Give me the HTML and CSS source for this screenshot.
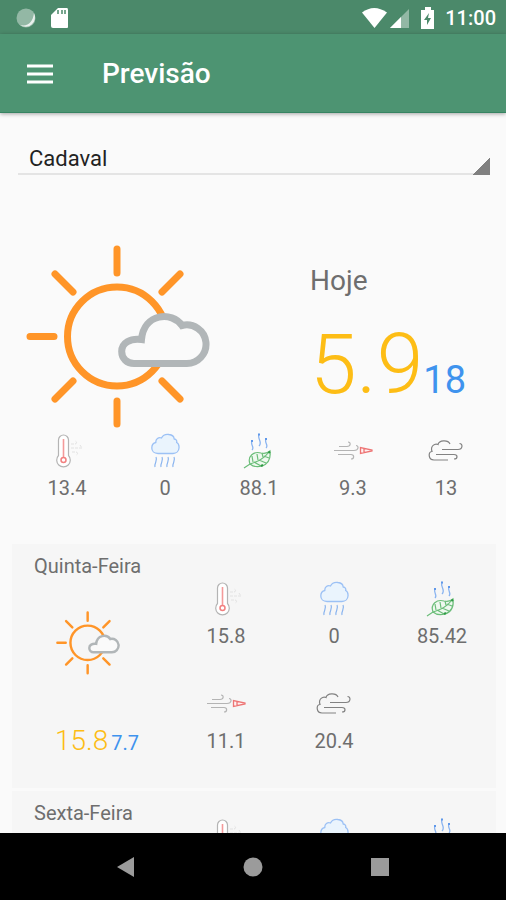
FILE: index.html
```html
<!DOCTYPE html>
<html lang="pt">
<head>
<meta charset="utf-8">
<meta name="viewport" content="width=device-width, initial-scale=1">
<title>Previsão</title>
<link rel="stylesheet" href="styles.css">
</head>
<body>
<svg class="sprite" aria-hidden="true">
  <symbol id="sun" viewBox="0 0 184 184">
    <g fill="none" stroke="#ff9528" stroke-width="7" stroke-linecap="round">
      <circle cx="91" cy="91.500" r="49.500"/>
      <path d="M91 4v24M91 156v23M4 91.500h24M29 29l18 18M154 29l-18 18M47 136l-18 18M136 136l18 18"/>
    </g>
    <path class="cloud" stroke="#b1b6b8" stroke-width="7" d="M108 118.500H160A19.300 19.300 0 1 0 156 80.500C146 66 118 68 115.500 94.500C104 93 95.700 98 95.700 106.500C95.700 113.500 101 118.500 108 118.500Z"/>
  </symbol>
  <symbol id="thermo" viewBox="0 0 40 36">
    <g fill="none">
      <path fill="#fff" stroke="#b4b4b4" stroke-width="1.200" d="M11.500 7a5 5 0 0 1 10 0v15.500a6.800 6.800 0 1 1-10 0z"/>
      <path stroke="#f49a9a" stroke-width="1.600" d="M16.500 6v18"/>
      <circle cx="16.500" cy="27" r="2.500" stroke="#f28080" stroke-width="1.500"/>
      <path stroke="#e2e2e2" stroke-dasharray="3 1" d="M24 15h11l-2-3M24 11h4c2 0 2-3 0-3M25 19h4c2 0 2 3 0 3"/>
    </g>
  </symbol>
  <symbol id="rain" viewBox="0 0 40 36">
    <path fill="#eaf4fd" stroke="#9cc1f5" stroke-width="1.300" d="M13 20.500C9 20.500 6.800 18 6.800 15c0-3 1.500-5 4-5.500C10.500 6 13.500 4 16.500 5c1.500-3 4.500-4 7.500-3.500 3 .3 5 2 5.200 4.500 2.300.3 2.800 2 2.500 3.500 1.800.8 2.500 3 2.300 5.500-.2 3-2.500 5.500-6 5.500z"/>
    <path fill="none" stroke="#89b4ef" stroke-width="1.200" d="M11 24c2 4-2 6-1 10M17 24c2 4-2 6-1 10M23 24c2 4-2 6-1 10M29 24c2 4-2 6-1 10"/>
  </symbol>
  <symbol id="leaf" viewBox="0 0 40 36">
    <g fill="none" stroke="#8ab4f0" stroke-width="1.300">
      <path d="M13 17c3-3-2-5 0-9M20 13c4-4-2-7 0-12M27 15c3-3-2-5 0-9"/>
      <path stroke="#5f98ea" stroke-width="2" d="M12 8h2M19 1.500h2M26 6h2"/>
    </g>
    <g fill="none" stroke="#6bbd79" stroke-width="1.200">
      <path fill="#eef8ef" d="M11 31C8 23 15 18 22 20c5 1 7 0 9-2 1 8-2 13-8 15-5 1.500-9 .5-12-2z"/>
      <path d="M5 35l6-4c6-2 13-4 19-12M14 29l-1-6M19 27l-1-6M24 24l-1-4M15 29l7 4M20 27l7 3M25 23l5 2"/>
      <path stroke="#2f9a45" stroke-width="2" d="M29.500 20l1.500-1.500M22 33l2-1"/>
    </g>
  </symbol>
  <symbol id="wind" viewBox="0 0 40 36">
    <path fill="none" stroke="#b4b4b4" stroke-width="1.200" d="M1 17.500h20c5 0 5-5 2-5M6 13.500h8c4 0 4-4.500 1-4.500M5 21.500h13c3.500 0 3.500 4.500 0 4.500"/>
    <path fill="#fff0f0" stroke="#ed7474" stroke-width="1.300" d="M27.500 14.500v6l11.500-2.500v-1zM31 15.500v4"/>
  </symbol>
  <symbol id="gust" viewBox="0 0 40 36">
    <path fill="none" stroke="#828282" stroke-width="1.200" d="M22 27H8C2 27 2 19 6 18.500 4 13 9 10 12 11.500 13 7 22 6.500 24 11M16 16.500h16c5 0 5-6 1.500-6M10 21.500h18c4 0 4 4.500 0 4.500"/>
  </symbol>
</svg>

<div class="status">
  <svg width="60" height="24" viewBox="0 0 60 24" aria-hidden="true">
    <circle cx="10" cy="12" r="9.500" fill="#fff" opacity=".4"/>
    <path d="M18 7a9.500 9.500 0 0 1-14 12c8 2 13-3 14-12z" fill="#fff" opacity=".8"/>
    <path d="M42 2h9q1 0 1 2v17q0 1-1 1H37q-2 0-2-2V9z" fill="#fff"/>
    <path d="M42 4v4M46 4v4M49 4v4" stroke="#4b896a" stroke-width="1.500"/>
  </svg>
  <div class="status-right">
    <svg width="76" height="24" viewBox="0 0 76 24" aria-hidden="true">
      <path d="M1 6.500Q13-2.500 26 6.500L13.500 22z" fill="#fff"/>
      <path d="M48 3v19H29z" fill="#fff" opacity=".4"/>
      <path d="M40 11v11H29z" fill="#fff"/>
      <path d="M64 1h6v3h3v19H60V4h4z" fill="#fff"/>
      <path d="M68 7l-5 7h3v5l4-7h-3z" fill="#4b896a"/>
    </svg>
    <time>11:00</time>
  </div>
</div>
<header class="toolbar">
  <button class="menu" aria-label="Menu">
    <svg width="28" height="20" viewBox="0 0 28 20"><path d="M1 2h26M1 10h26M1 18h26" stroke="#fff" stroke-width="3"/></svg>
  </button>
  <h1>Previsão</h1>
</header>

<main>
  <select class="place" aria-label="Local"><option>Cadaval</option></select>

  <section class="today">
    <svg class="today-sun"><use href="#sun"/></svg>
    <div class="today-info">
      <h2>Hoje</h2>
      <p class="temps"><span class="max">5.9</span><span class="min">18</span></p>
    </div>
  </section>
  <ul class="metrics metrics-today">
    <li><svg><use href="#thermo"/></svg>13.4</li>
    <li><svg><use href="#rain"/></svg>0</li>
    <li><svg><use href="#leaf"/></svg>88.1</li>
    <li><svg><use href="#wind"/></svg>9.3</li>
    <li><svg><use href="#gust"/></svg>13</li>
  </ul>

  <section class="day">
    <div class="summary">
      <h3>Quinta-Feira</h3>
      <svg class="day-sun"><use href="#sun"/></svg>
      <p class="temps"><span class="max">15.8</span><span class="min">7.7</span></p>
    </div>
    <ul class="metrics">
      <li><svg><use href="#thermo"/></svg>15.8</li>
      <li><svg><use href="#rain"/></svg>0</li>
      <li><svg><use href="#leaf"/></svg>85.42</li>
      <li><svg><use href="#wind"/></svg>11.1</li>
      <li><svg><use href="#gust"/></svg>20.4</li>
    </ul>
  </section>
  <section class="day day-compact">
    <div class="summary">
      <h3>Sexta-Feira</h3>
    </div>
    <ul class="metrics">
      <li><svg><use href="#thermo"/></svg></li>
      <li><svg><use href="#rain"/></svg></li>
      <li><svg><use href="#leaf"/></svg></li>
    </ul>
  </section>
</main>

<nav class="system">
  <button aria-label="Voltar"><svg width="20" height="20" viewBox="0 0 20 20"><path d="M18 0v20L1 10z"/></svg></button>
  <button aria-label="Início"><svg width="20" height="20" viewBox="0 0 20 20"><circle cx="10" cy="10" r="9.500"/></svg></button>
  <button aria-label="Recentes"><svg width="20" height="20" viewBox="0 0 20 20"><path d="M1 1h18v18H1z"/></svg></button>
</nav>
</body>
</html>
```
FILE: styles.css
```css
* { box-sizing: border-box; }

body {
  margin: 0;
  height: 100vh;
  display: flex;
  flex-direction: column;
  background: #fafafa;
  color: #6e6e6e;
  font-family: Roboto, sans-serif;
}

h1, h2, h3, p, ul { margin: 0; padding: 0; font-weight: 400; }
button { border: 0; padding: 0; background: none; }
svg { display: block; }
.sprite { position: absolute; width: 0; height: 0; }

.status {
  flex: none;
  display: flex;
  justify-content: space-between;
  align-items: center;
  height: 34px;
  padding: 2px 10px 0 16px;
  background: #4b896a;
  color: #fff;
  font-size: 20px;
  font-weight: 500;
}
.status-right { display: flex; align-items: center; gap: 8px; }

.toolbar {
  flex: none;
  display: flex;
  align-items: center;
  gap: 48px;
  height: 79px;
  padding: 2px 26px 0;
  background: #4d9472;
  border-bottom: 1px solid #378462;
  box-shadow: 0 1px 4px rgba(0, 0, 0, .35);
  color: #fff;
  z-index: 1;
}
.toolbar h1 { font-size: 28px; line-height: 36px; font-weight: 500; }

main {
  flex: 1;
  min-height: 0;
  overflow-y: auto;
  scrollbar-width: none;
  padding: 30px 10px 0 12px;
}

.place {
  appearance: none;
  display: block;
  width: calc(100% - 12px);
  height: 32px;
  margin: 0 6px;
  padding: 0 24px 0 11px;
  border: 0;
  border-radius: 0;
  background:
    linear-gradient(to bottom right, transparent 50%, #808080 50%) right bottom / 17px 17px no-repeat,
    linear-gradient(#e4e4e4, #e4e4e4) left bottom / 100% 2px no-repeat;
  color: #222;
  font: 22px/30px Roboto, sans-serif;
}

.today {
  display: grid;
  grid-template-columns: 284fr 200fr;
  padding: 70px 0 4px;
}
.today-sun { width: 184px; height: 184px; margin-left: 14px; }
.cloud { fill: #fafafa; }
.today-info { padding: 20px 0 0 14px; }
.today h2 { font-size: 28px; line-height: 32px; }

.temps { display: flex; align-items: baseline; white-space: nowrap; }
.max { color: #fdbd15; font-weight: 300; }
.min { color: #3f93ee; }
.today .temps { height: 128px; }
.today .max { font-size: 84px; line-height: 136px; }
.today .min { font-size: 38px; }

.metrics { display: grid; list-style: none; align-content: start; }
.metrics li {
  display: flex;
  flex-direction: column;
  align-items: center;
  gap: 7px;
  font-size: 20px;
  line-height: 24px;
}
.metrics svg { width: 40px; height: 36px; overflow: visible; }
.metrics-today {
  grid-template-columns: 49fr 49fr 45fr 49fr 44fr;
  padding: 0 6px 44px;
}

.day {
  display: grid;
  grid-template-columns: 160fr 324fr;
  min-height: 244px;
  margin-bottom: 3px;
  background: #f6f6f6;
}
.day .cloud { fill: #f6f6f6; }
.summary { padding-top: 10px; }
.day h3 { padding-left: 22px; font-size: 20px; line-height: 24px; }
.day-sun { width: 64px; height: 64px; margin: 33px 0 46px 44px; }
.day .temps { padding-left: 43px; gap: 3px; }
.day .max { font-size: 28px; line-height: 40px; }
.day .min { font-size: 20px; }
.day .metrics { grid-template-columns: repeat(3, 1fr); row-gap: 38px; padding-top: 37px; }
.day-compact .metrics { padding-top: 27px; }

.system {
  flex: none;
  display: grid;
  grid-template-columns: repeat(3, 1fr);
  width: 100%;
  height: 67px;
  padding: 0 63px;
  background: #000;
  fill: #9b9b9b;
}
.system button { display: grid; place-items: center; }
```
